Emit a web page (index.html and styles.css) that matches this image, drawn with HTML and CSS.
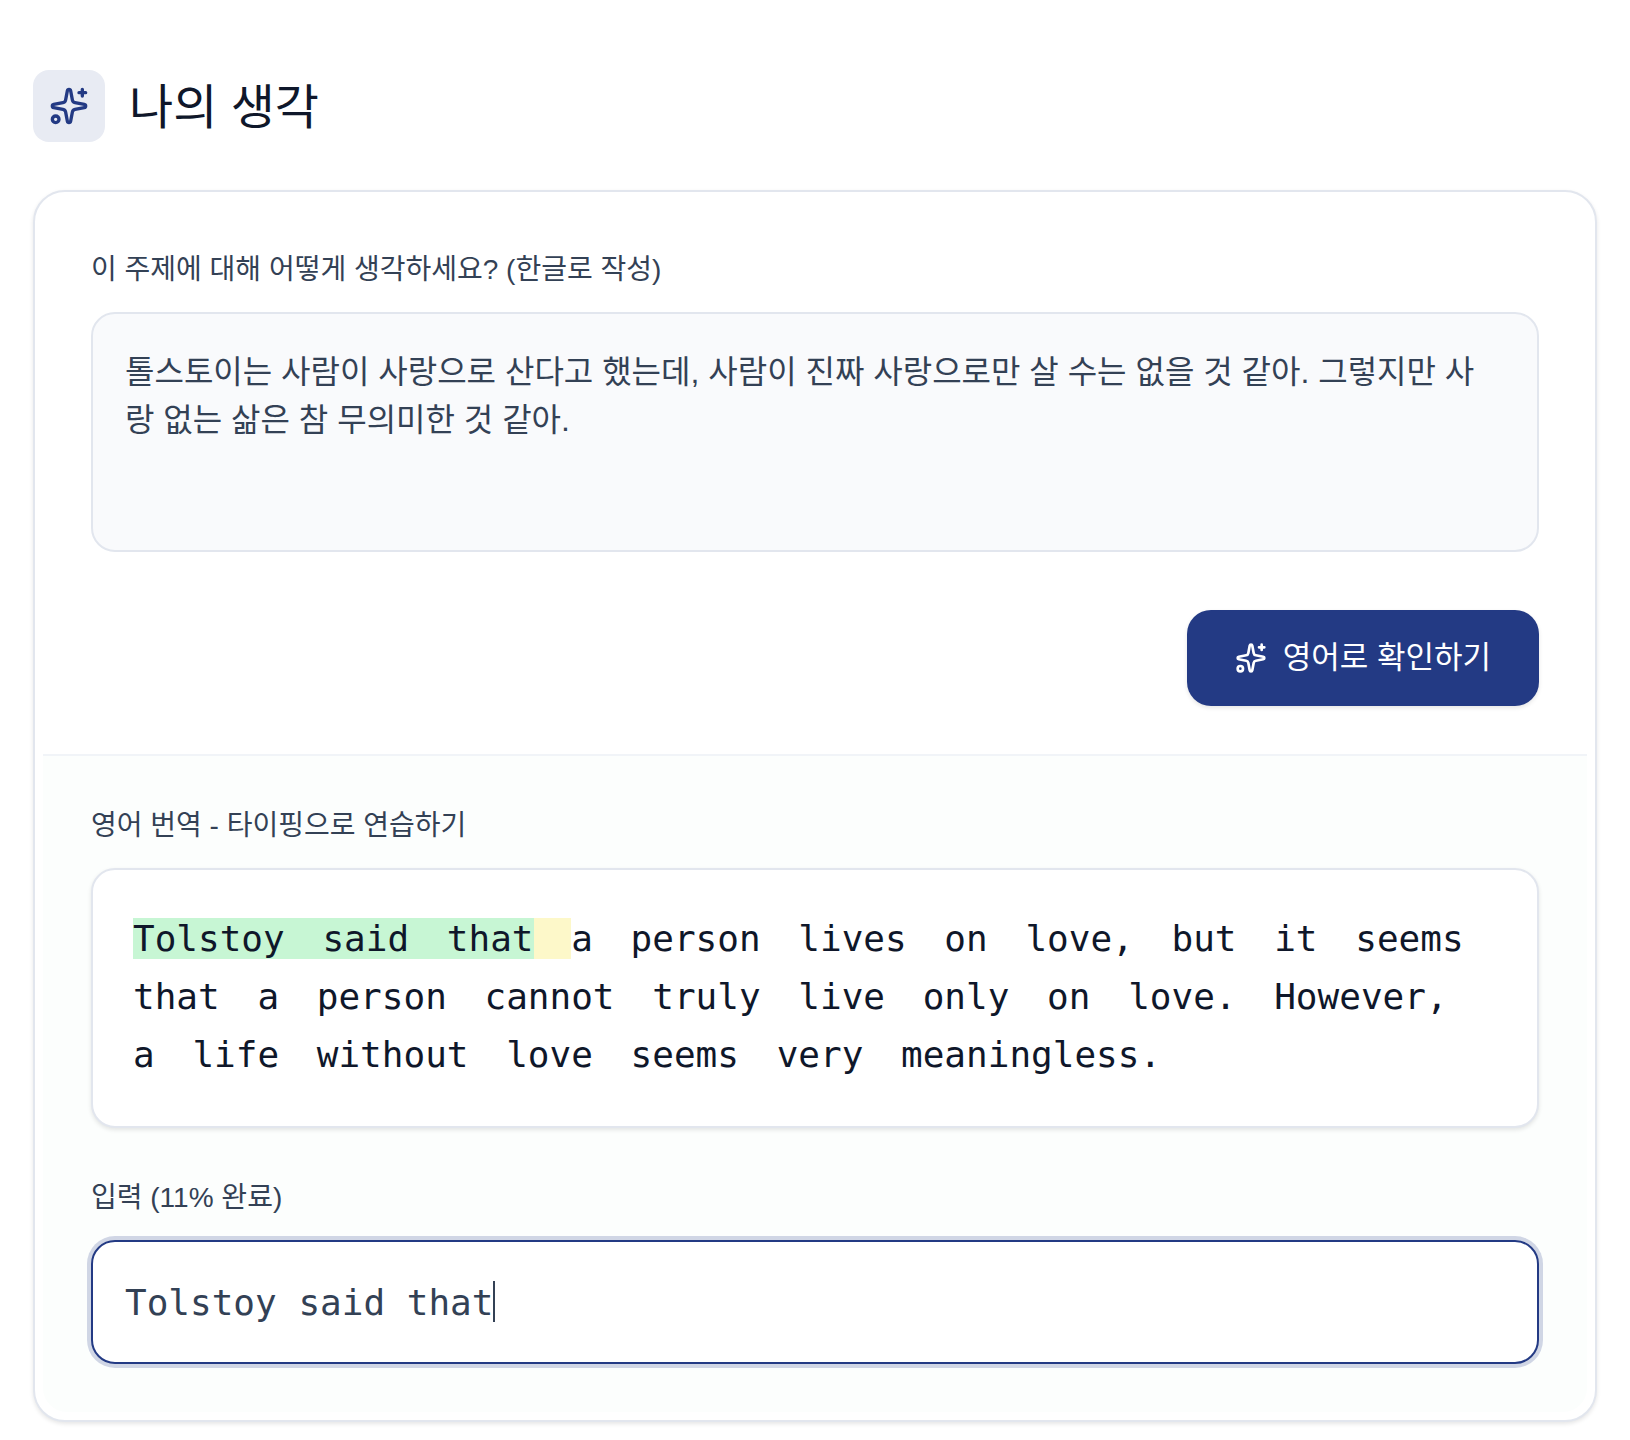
FILE: index.html
```html
<!DOCTYPE html>
<html lang="ko">
<head>
  <meta charset="UTF-8" />
  <meta name="viewport" content="width=device-width, initial-scale=1.0"/>
  <title>나의 생각</title>
  <link rel="stylesheet" href="styles.css">
</head>
<body>
  <header class="page-header">
    <div class="header-icon">
      <svg class="sparkles" width="40" height="40" viewBox="0 0 24 24" aria-hidden="true">
        <path d="M11.017 2.814a1 1 0 0 1 1.966 0l1.051 5.558a2 2 0 0 0 1.594 1.594l5.558 1.051a1 1 0 0 1 0 1.966l-5.558 1.051a2 2 0 0 0-1.594 1.594l-1.051 5.558a1 1 0 0 1-1.966 0l-1.051-5.558a2 2 0 0 0-1.594-1.594l-5.558-1.051a1 1 0 0 1 0-1.966l5.558-1.051a2 2 0 0 0 1.594-1.594z"/>
        <path d="M20 2v4M22 4h-4"/>
        <circle cx="4" cy="20" r="2"/>
      </svg>
    </div>
    <h1>나의 생각</h1>
  </header>

  <main class="card">
    <section class="thought">
      <label for="thought">이 주제에 대해 어떻게 생각하세요? (한글로 작성)</label>
      <textarea id="thought" spellcheck="false">톨스토이는 사람이 사랑으로 산다고 했는데, 사람이 진짜 사랑으로만 살 수는 없을 것 같아. 그렇지만 사랑 없는 삶은 참 무의미한 것 같아.</textarea>
      <button type="button" class="check-btn">
        <svg class="sparkles" width="32" height="32" viewBox="0 0 24 24" aria-hidden="true">
          <path d="M11.017 2.814a1 1 0 0 1 1.966 0l1.051 5.558a2 2 0 0 0 1.594 1.594l5.558 1.051a1 1 0 0 1 0 1.966l-5.558 1.051a2 2 0 0 0-1.594 1.594l-1.051 5.558a1 1 0 0 1-1.966 0l-1.051-5.558a2 2 0 0 0-1.594-1.594l-5.558-1.051a1 1 0 0 1 0-1.966l5.558-1.051a2 2 0 0 0 1.594-1.594z"/>
          <path d="M20 2v4M22 4h-4"/>
          <circle cx="4" cy="20" r="2"/>
        </svg>
        영어로 확인하기
      </button>
    </section>

    <section class="practice">
      <h2>영어 번역 - 타이핑으로 연습하기</h2>
      <p class="sentence" lang="en"><span class="done">Tolstoy<span class="gap"> </span>said<span class="gap"> </span>that</span><span class="gap current"> </span>a<span class="gap"> </span>person<span class="gap"> </span>lives<span class="gap"> </span>on<span class="gap"> </span>love,<span class="gap"> </span>but<span class="gap"> </span>it<span class="gap"> </span>seems<span class="gap"> </span>that<span class="gap"> </span>a<span class="gap"> </span>person<span class="gap"> </span>cannot<span class="gap"> </span>truly<span class="gap"> </span>live<span class="gap"> </span>only<span class="gap"> </span>on<span class="gap"> </span>love.<span class="gap"> </span>However,<span class="gap"> </span>a<span class="gap"> </span>life<span class="gap"> </span>without<span class="gap"> </span>love<span class="gap"> </span>seems<span class="gap"> </span>very<span class="gap"> </span>meaningless.</p>
      <label for="typing">입력 (11% 완료)</label>
      <div class="typing-field">
        <input type="text" id="typing" value="Tolstoy said that" autocomplete="off" spellcheck="false" />
        <span class="caret"></span>
      </div>
    </section>
  </main>
</body>
</html>
```
FILE: styles.css
```css
* {
  box-sizing: border-box;
}

body {
  margin: 0;
  padding: 70px 33px 18px;
  font-family: "Liberation Sans", "Noto Sans CJK KR", sans-serif;
  background: #fff;
  color: #334155;
}

.page-header {
  display: flex;
  align-items: center;
  gap: 24px;
  margin-bottom: 48px;
}

.header-icon {
  display: flex;
  align-items: center;
  justify-content: center;
  width: 72px;
  height: 72px;
  border-radius: 16px;
  background: #e8ebf3;
  color: #233a84;
}

.sparkles {
  fill: none;
  stroke: currentColor;
  stroke-width: 2;
  stroke-linecap: round;
  stroke-linejoin: round;
}

h1 {
  margin: 0;
  padding-top: 4px;
  font-size: 48px;
  font-weight: 400;
  line-height: 64px;
  color: #0f172a;
}

.card {
  padding: 8px;
  border: 2px solid #e2e6ee;
  border-radius: 32px;
  background: #fff;
  box-shadow: 0 2px 4px rgba(0, 0, 0, 0.1);
}

.thought,
.practice {
  display: flex;
  flex-direction: column;
  padding: 48px;
}

.practice {
  border-top: 2px solid #f1f4f8;
  border-radius: 0 0 24px 24px;
  background: #fcfefd;
}

label,
h2 {
  margin: 0 0 20px;
  font-size: 28px;
  font-weight: 400;
  line-height: 44px;
}

textarea {
  height: 240px;
  padding: 34px 40px 30px 32px;
  border: 2px solid #e2e6ee;
  border-radius: 24px;
  background: #f9fafc;
  color: #334155;
  font-family: inherit;
  font-size: 32px;
  line-height: 48px;
  resize: none;
  outline: none;
}

.check-btn {
  display: flex;
  align-items: center;
  align-self: flex-end;
  gap: 16px;
  height: 96px;
  margin-top: 58px;
  padding: 0 48px;
  border: none;
  border-radius: 24px;
  background: #233a84;
  color: #fff;
  font-family: inherit;
  font-size: 31px;
  font-weight: 400;
  line-height: 48px;
  box-shadow: 0 2px 4px rgba(0, 0, 0, 0.1);
  cursor: pointer;
}

.sentence {
  margin: 0 0 48px;
  padding: 40px 32px 42px 40px;
  border: 2px solid #e2e6ee;
  border-radius: 24px;
  background: #fff;
  color: #0f172a;
  font-family: "DejaVu Sans Mono", monospace;
  font-size: 36px;
  line-height: 58px;
  box-shadow: 0 2px 4px rgba(0, 0, 0, 0.1);
}

.gap {
  padding: 0 8px;
}

.done {
  background: #c7f6d4;
}

.current {
  background: #fdf8c9;
}

.typing-field {
  position: relative;
  font-family: "DejaVu Sans Mono", monospace;
  font-size: 36px;
}

.typing-field input {
  display: block;
  width: 100%;
  height: 124px;
  padding: 0 32px;
  border: 2px solid #233a84;
  border-radius: 24px;
  background: #fff;
  color: #334155;
  font: inherit;
  outline: none;
  box-shadow: 0 0 0 4px #d0d6e5;
}

/* sits after the 17 typed characters */
.caret {
  position: absolute;
  top: 41px;
  left: calc(34px + 17ch);
  width: 2px;
  height: 41px;
  background: #334155;
}
```
